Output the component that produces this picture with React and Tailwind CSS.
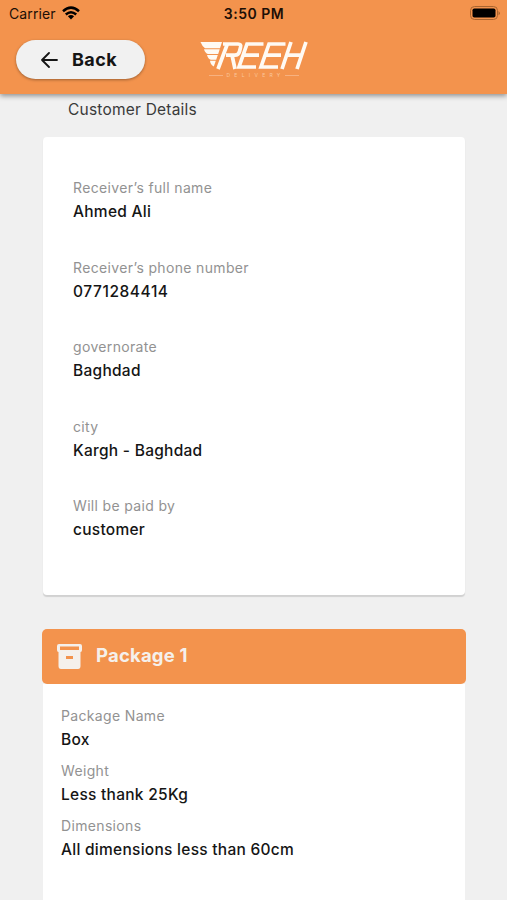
const customer = [
  ["Receiver’s full name", "Ahmed Ali"],
  ["Receiver’s phone number", "0771284414", "tracking-[0.56px]"],
  ["governorate", "Baghdad"],
  ["city", "Kargh - Baghdad"],
  ["Will be paid by", "customer"],
];

const parcel = [
  ["Package Name", "Box"],
  ["Weight", "Less thank 25Kg"],
  ["Dimensions", "All dimensions less than 60cm"],
];

function Field({ label, value, tracking = "tracking-[0.27px]" }) {
  return (
    <div>
      <div className="h-6 text-[14px] leading-6 tracking-[0.34px] text-[#929292]">{label}</div>
      <div className={`h-6 text-[15.5px] font-medium leading-6 text-[#151515] ${tracking}`}>{value}</div>
    </div>
  );
}

function StatusBar() {
  return (
    <div className="grid h-7 grid-cols-3 items-center pl-[9px] pr-[7px] text-[#1c0f06]">
      <div className="flex items-center gap-[6px]">
        <span className="text-[14px] leading-7 tracking-[0.1px]">Carrier</span>
        <svg width="18" height="14" viewBox="0 0 18 14" className="-mt-[2px]" fill="none" stroke="#000" strokeWidth="2.5">
          <path d="M1 5.2Q9-2 17 5.2M3.8 8.5Q9 4 14.2 8.5" />
          <path d="M9 13.4 5.9 10.3Q9 7.8 12.1 10.3Z" fill="#000" stroke="none" />
        </svg>
      </div>
      <div className="-ml-[1px] text-center text-[14px] font-semibold leading-7 tracking-[0.5px]">3:50 PM</div>
      <svg className="-mt-[2px] justify-self-end" width="31" height="15" viewBox="0 0 31 15">
        <rect x="1.5" y="0.5" width="27" height="13" rx="4" fill="none" stroke="#a9642f" />
        <rect x="3.5" y="2.5" width="23" height="9" rx="1.8" fill="#000" />
        <path d="M29.5 5v4.5q3-2.2 0-4.5" fill="#a9642f" />
      </svg>
    </div>
  );
}

function Logo() {
  return (
    <div className="flex w-[108px] flex-col items-center pt-px">
      <svg width="108" height="29" viewBox="0 0 108 29" fill="#fffaf3">
        <path d="M0.5 1H22L20 7.2H5Q2 5 0.5 1ZM4 8.2H19.7L18.2 13H8Q5 12 4 8.2ZM7 14H17.8L16.2 18.8H11Q8 18 7 14ZM10 19.8H15.8L13.8 25.5Q10.500 24 10 19.8Z" />
        <g fill="none" stroke="#fffaf3" strokeWidth="3.7">
          <path d="M23 3H38Q41.5 3 40.500 6.500L39.500 10.500Q38.500 14.200 35 14.200H26M27 4 18 28M32 14 35 28" />
          <path d="M63.500 3H47L39 26H56M43 14.200H59M85.500 3H69L61 26H78M65 14.200H81M91 1 82 28M106 1 97 28M86 14.200H102" />
        </g>
      </svg>
      <div className="flex items-center gap-[3px] text-[5px] leading-[10px] tracking-[4.3px] text-[#fbc79d]">
        <i className="h-px w-[14px] bg-[#f7b180]" />
        <span className="-mr-[3px]">DELIVERY</span>
        <i className="h-px w-[14px] bg-[#f7b180]" />
      </div>
    </div>
  );
}

export default function App() {
  return (
    <div className="h-[900px] w-full overflow-hidden bg-[#f0f0f0] font-['Inter',sans-serif]">
      <header className="relative h-[94px] bg-[#f3934d] shadow-[0_2px_5px_rgba(0,0,0,0.4)]">
        <StatusBar />
        <div className="flex pl-[15.5px] pt-3">
          <button className="flex h-[39px] w-[129.5px] items-center rounded-full bg-[#f1f1f1] pl-[25.5px] text-[18px] font-bold tracking-[0.4px] text-[#151515] shadow-[0_1px_3px_rgba(0,0,0,0.35)]">
            <svg width="17" height="16" viewBox="0 0 17 16" fill="none" stroke="#151515" strokeWidth="1.8" strokeLinecap="round" strokeLinejoin="round">
              <path d="M8 1 1 8l7 7M1 8h15" />
            </svg>
            <span className="ml-[14px]">Back</span>
          </button>
          <div className="ml-[55px]">
            <Logo />
          </div>
        </div>
      </header>
      <h1 className="h-[43px] pl-[68px] pt-1 text-[15.5px] font-normal leading-6 tracking-[0.22px] text-[#3a3a3a]">Customer Details</h1>
      <section className="ml-[43px] flex h-[458px] w-[422px] flex-col gap-[31.5px] rounded-[4px] bg-white pl-[30px] pt-[39px] shadow-[0_1.5px_1px_rgba(0,0,0,0.13)]">
        {customer.map(([label, value, tracking]) => (
          <Field key={label} label={label} value={value} tracking={tracking} />
        ))}
      </section>
      <section className="ml-[42px] mt-[34px] w-[424px]">
        <h2 className="flex h-[55px] items-center rounded-[5px] bg-[#f3934d] pl-[15px] text-[18.5px] font-bold tracking-[0.2px] text-[#f5f0eb]">
          <svg width="25" height="25" viewBox="0 0 25 25">
            <path fillRule="evenodd" fill="#f5f0eb" d="M2 0H23Q25 0 25 2V6Q25 8 23.5 8V22Q23.5 25 21 25H4Q1.5 25 1.5 22V8Q0 8 0 6V2Q0 0 2 0ZM3 2.5V6H22V2.5ZM9 12V15H16V12Z" />
          </svg>
          <span className="-mt-0.5 ml-[14px]">Package 1</span>
        </h2>
        <div className="ml-px flex h-[230px] w-[422px] flex-col gap-[7px] bg-white pl-[18px] pt-5">
          {parcel.map(([label, value]) => (
            <Field key={label} label={label} value={value} />
          ))}
        </div>
      </section>
    </div>
  );
}
